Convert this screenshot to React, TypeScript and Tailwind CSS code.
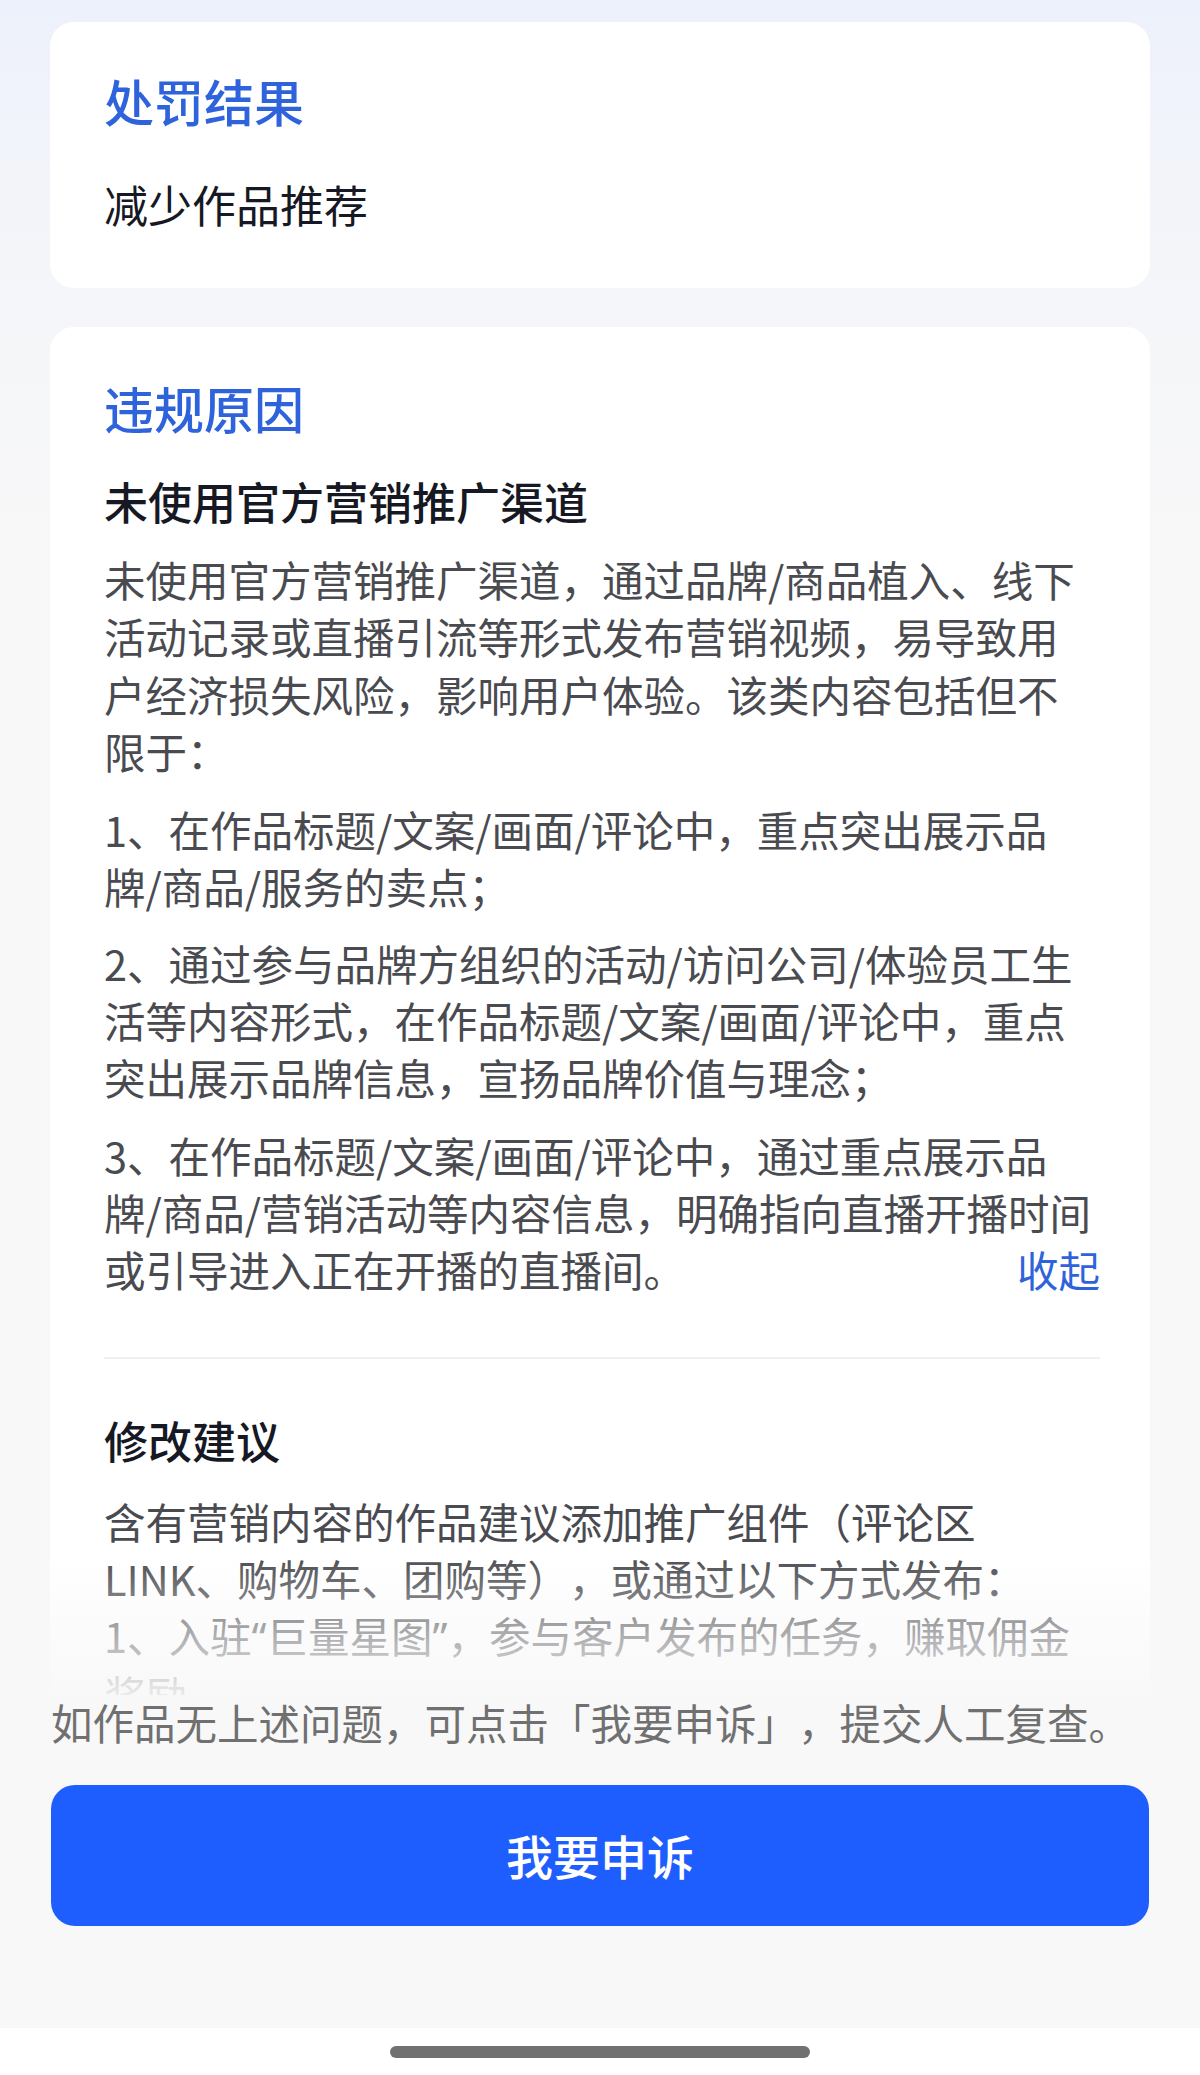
export default function App() {
  const bodyLine = "whitespace-nowrap";
  const q = "font-['Noto_Sans',sans-serif]";
  return (
    <div className="w-[1200px] h-[2075px] flex flex-col bg-[#f8f8f8] font-['Noto_Sans_CJK_SC',sans-serif] [text-spacing-trim:space-all] overflow-hidden">
      <div className="relative h-[1695px] shrink-0 overflow-hidden bg-[linear-gradient(180deg,#edf1fb_0px,#f5f6f9_300px,#f8f8f8_600px)]">
        <div className="px-[50px] pt-[22px] flex flex-col gap-[39px]">
          <div className="bg-white rounded-[24px] pl-[54px] pr-[50px] pt-[44px] pb-[54px]">
            <div className="text-[50px] leading-[68px] font-medium text-[#2e63dc]">处罚结果</div>
            <div className="mt-[40px] text-[44px] leading-[60px] text-[#161823]">减少作品推荐</div>
          </div>

          <div className="bg-white rounded-[24px] pl-[54px] pr-[50px] pt-[46px] pb-[80px]">
            <div className="text-[50px] leading-[68px] font-medium text-[#2e63dc]">违规原因</div>
            <div className="mt-[30px] text-[44px] leading-[60px] font-medium text-[#161823]">未使用官方营销推广渠道</div>
            <div className="mt-[20px] text-[41.5px] leading-[57.3px] text-[#4a4b50]">
              <div>
                <div className={bodyLine}>未使用官方营销推广渠道，通过品牌/商品植入、线下</div>
                <div className={bodyLine}>活动记录或直播引流等形式发布营销视频，易导致用</div>
                <div className={bodyLine}>户经济损失风险，影响用户体验。该类内容包括但不</div>
                <div className={bodyLine}>限于：</div>
              </div>
              <div className="mt-[21px]">
                <div className={bodyLine}>1、在作品标题/文案/画面/评论中，重点突出展示品</div>
                <div className={bodyLine}>牌/商品/服务的卖点；</div>
              </div>
              <div className="mt-[19px]">
                <div className={bodyLine}>2、通过参与品牌方组织的活动/访问公司/体验员工生</div>
                <div className={bodyLine}>活等内容形式，在作品标题/文案/画面/评论中，重点</div>
                <div className={bodyLine}>突出展示品牌信息，宣扬品牌价值与理念；</div>
              </div>
              <div className="mt-[20px]">
                <div className={bodyLine}>3、在作品标题/文案/画面/评论中，通过重点展示品</div>
                <div className={bodyLine}>牌/商品/营销活动等内容信息，明确指向直播开播时间</div>
                <div className="flex justify-between whitespace-nowrap">
                  <span>或引导进入正在开播的直播间。</span>
                  <span className="text-[#2e63dc]">收起</span>
                </div>
              </div>
            </div>

            <div className="mt-[58px] h-[2px] bg-[#f0f0f2]" />

            <div className="mt-[51px] text-[44px] leading-[60px] font-medium text-[#161823]">修改建议</div>
            <div className="mt-[23px] text-[41.5px] leading-[57.3px] text-[#4a4b50]">
              <div className={bodyLine}>含有营销内容的作品建议添加推广组件（评论区</div>
              <div className={bodyLine}>LINK、购物车、团购等），或通过以下方式发布：</div>
              <div className={bodyLine}>
                1、入驻<span className={q}>“</span>巨量星图<span className={q}>”</span>，参与客户发布的任务，赚取佣金
              </div>
              <div className={bodyLine}>奖励</div>
              <div className={bodyLine}>2、开通<span className={q}>“</span>抖音小店<span className={q}>”</span>或使用商品橱窗功能进行推广</div>
            </div>
          </div>
        </div>
        <div className="absolute left-0 right-0 bottom-0 h-[140px] bg-[linear-gradient(180deg,rgba(248,248,248,0)_0%,rgba(248,248,248,0.55)_55%,rgba(248,248,248,0.92)_100%)]" />
      </div>

      <div className="px-[51px]">
        <div className="text-[41.5px] leading-[54px] text-[#707070] whitespace-nowrap">如作品无上述问题，可点击「我要申诉」，提交人工复查。</div>
        <button className="mt-[36px] w-full h-[141px] rounded-[24px] bg-[#1f5efe] text-white text-[47px] font-medium flex items-center justify-center">
          我要申诉
        </button>
      </div>

      <div className="mt-auto h-[47px] bg-white flex justify-center pt-[18px]">
        <div className="w-[420px] h-[12px] rounded-full bg-[#717171]" />
      </div>
    </div>
  );
}
